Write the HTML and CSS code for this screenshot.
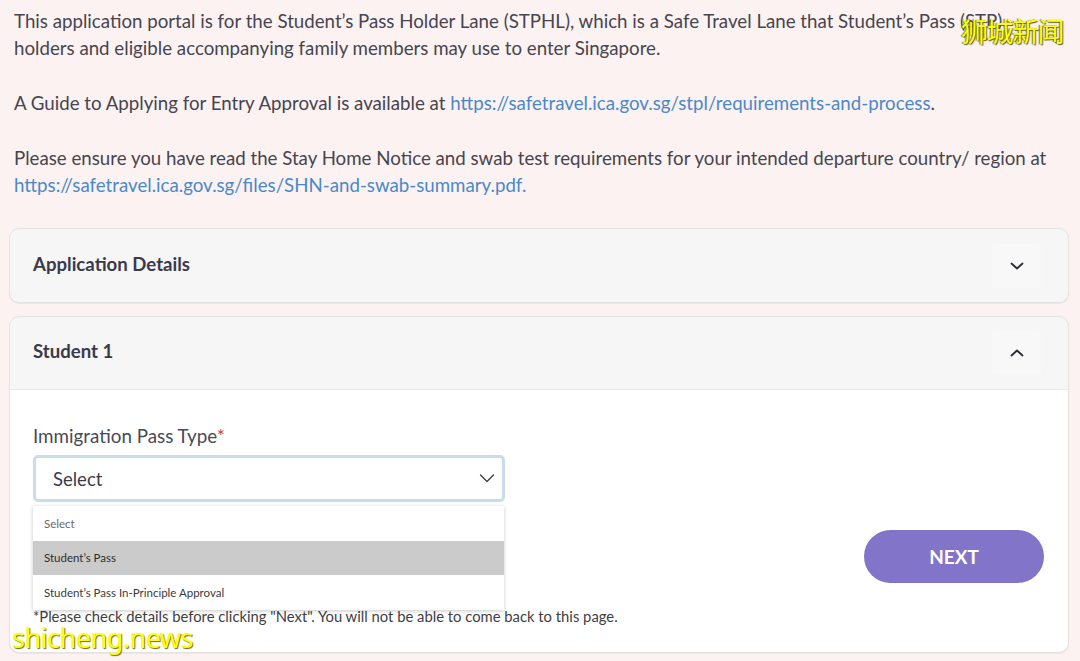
FILE: index.html
```html
<!DOCTYPE html>
<html lang="en">
<head>
<meta charset="utf-8">
<title>Student's Pass Holder Lane</title>
<link rel="stylesheet" href="styles.css">
</head>
<body>
<div class="page">
  <div class="intro">
    <p>This application portal is for the Student’s Pass Holder Lane (STPHL), which is a Safe Travel Lane that Student’s Pass (STP) holders and eligible accompanying family members may use to enter Singapore.</p>
    <p>A Guide to Applying for Entry Approval is available at <a href="#">https://safetravel.ica.gov.sg/stpl/requirements-and-process</a>.</p>
    <p>Please ensure you have read the Stay Home Notice and swab test requirements for your intended departure country/ region at <a href="#">https://safetravel.ica.gov.sg/files/SHN-and-swab-summary.pdf.</a></p>
  </div>

  <section class="card collapsed">
    <div class="card-head">
      <h2>Application Details</h2>
      <span class="toggle">
        <svg width="14" height="8" viewBox="0 0 14 8"><path d="M1.5 1.5 L7 6.5 L12.5 1.5" fill="none" stroke="#2b2b33" stroke-width="1.8" stroke-linecap="round" stroke-linejoin="round"/></svg>
      </span>
    </div>
  </section>

  <section class="card open">
    <div class="card-head">
      <h2>Student 1</h2>
      <span class="toggle">
        <svg width="14" height="8" viewBox="0 0 14 8"><path d="M1.5 6.5 L7 1.5 L12.5 6.5" fill="none" stroke="#2b2b33" stroke-width="1.8" stroke-linecap="round" stroke-linejoin="round"/></svg>
      </span>
    </div>
    <div class="card-body">
      <label class="field-label">Immigration Pass Type<span class="req">*</span></label>
      <div class="select-wrap">
        <div class="select">
          <span>Select</span>
          <svg width="16" height="9" viewBox="0 0 16 9"><path d="M1.5 1 L8 7.5 L14.5 1" fill="none" stroke="#3a3a44" stroke-width="1.3" stroke-linecap="round" stroke-linejoin="round"/></svg>
        </div>
        <ul class="menu">
          <li class="placeholder">Select</li>
          <li class="active">Student’s Pass</li>
          <li>Student’s Pass In-Principle Approval</li>
        </ul>
      </div>
      <div class="actions">
        <button class="next">NEXT</button>
      </div>
      <p class="note">*Please check details before clicking "Next". You will not be able to come back to this page.</p>
    </div>
  </section>
</div>
<div class="wm-cn">狮城新闻</div>
<div class="wm-en">shicheng.news</div>
</body>
</html>
```

FILE: styles.css
```css
* { box-sizing: border-box; }
html, body { margin: 0; padding: 0; }
body {
  background: #fcf2f2;
  font-family: Lato, "Noto Sans", sans-serif;
  color: #46454f;
  width: 1080px;
  height: 661px;
  overflow: hidden;
  position: relative;
}
.page {
  padding: 8px 11px 0 9px;
}
.intro {
  padding: 0 6px 0 5px;
  font-size: 18.7px;
  line-height: 27px;
}
.intro p { margin: 0 0 28px 0; }
.intro p:last-child { margin-bottom: 29px; }
.intro a { color: #4a89c6; text-decoration: none; }

.card {
  background: #f6f6f6;
  border: 1px solid #e6e3e3;
  border-radius: 10px;
  box-shadow: 0 1px 1px rgba(0,0,0,0.06);
}
.card.collapsed { margin-bottom: 13px; }
.card-head {
  display: flex;
  align-items: center;
  justify-content: space-between;
  padding: 0 27px 0 23px;
  height: 73px;
}
.card-head h2 {
  margin: 0;
  padding-bottom: 4px;
  font-size: 18.6px;
  font-weight: 700;
  color: #3b3a4a;
}
.toggle {
  width: 49px;
  height: 44px;
  display: flex;
  align-items: center;
  justify-content: center;
  background: #f8f8f8;
  border-radius: 4px;
}
.card.open .card-head { border-bottom: 1px solid #ebe9e9; }
.card-body {
  background: #fff;
  border-radius: 0 0 10px 10px;
  padding: 35px 24px 27px 23px;
}
.field-label {
  display: block;
  font-size: 18.8px;
  line-height: 22px;
  color: #4a4955;
}
.req { color: #d63a3a; }
.select-wrap {
  position: relative;
  width: 472px;
  margin-top: 8px;
}
.select {
  height: 47px;
  border: 3px solid #c9dcee;
  border-radius: 5px;
  background: #fff;
  display: flex;
  align-items: center;
  justify-content: space-between;
  padding: 0 7px 0 17px;
  font-size: 18.5px;
  color: #3c3b46;
}
.menu {
  position: absolute;
  left: 0;
  top: 51px;
  width: 471px;
  margin: 0;
  padding: 0;
  list-style: none;
  background: #fff;
  box-shadow: 0 1px 4px rgba(0,0,0,0.22);
  z-index: 2;
}
.menu li {
  height: 34.5px;
  display: flex;
  align-items: center;
  padding-left: 11px;
  font-size: 11.5px;
  color: #3b3b3b;
}
.menu li.placeholder { color: #6a6a6a; }
.menu li.active { background: #cbcbcb; color: #2e2e2e; }
.actions {
  display: flex;
  justify-content: flex-end;
  margin-top: 28px;
}
.next {
  width: 180px;
  height: 53px;
  border: none;
  border-radius: 27px;
  background: #8275c9;
  color: #fff;
  font-family: Lato, "Noto Sans", sans-serif;
  font-size: 19px;
  font-weight: 700;
}
.note {
  margin: 24px 0 0 0;
  font-size: 14.8px;
  line-height: 18px;
  color: #3e3e44;
}
.wm-cn {
  position: absolute;
  top: 13px;
  left: 961px;
  font-family: "Noto Sans CJK SC", sans-serif;
  font-size: 27px;
  line-height: 36px;
  color: #ffff00;
  text-shadow: 1px 1px 1px #5a5a20, -1px 0 1px #7a7a30;
  letter-spacing: -1.5px;
}
.wm-en {
  position: absolute;
  left: 12px;
  top: 620px;
  font-family: "Noto Sans", sans-serif;
  font-size: 27px;
  line-height: 36px;
  color: #ffff00;
  text-shadow: 1px 1px 1px #6a6a20;
  letter-spacing: -0.5px;
}
```
